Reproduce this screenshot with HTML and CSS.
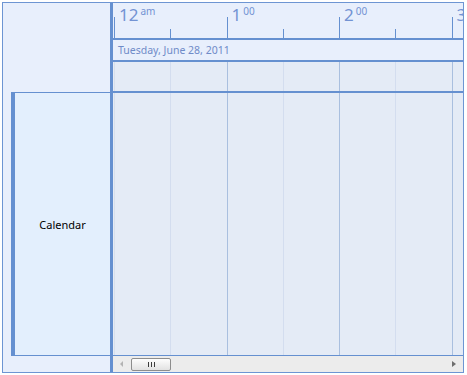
FILE: index.html
```html
<!DOCTYPE html>
<html>
<head>
  <meta charset="UTF-8">
  <title>Schedule</title>
  <link rel="stylesheet" href="styles.css">
</head>
<body>

  <div class="scheduler">
    <div class="side">
      <div class="side-top"></div>
      <div class="resource">Calendar</div>
      <div class="side-bottom"></div>
    </div>

    <div class="main">
      <div class="ruler">
        <div class="hour"><span class="hour-num">12</span><sup>am</sup></div>
        <div class="hour"><span class="hour-num">1</span><sup>00</sup></div>
        <div class="hour"><span class="hour-num">2</span><sup>00</sup></div>
        <div class="hour"><span class="hour-num">3</span><sup>00</sup></div>
      </div>

      <div class="date-row">Tuesday, June 28, 2011</div>

      <div class="slots allday">
        <div class="slot"></div>
        <div class="slot half"></div>
        <div class="slot"></div>
        <div class="slot half"></div>
        <div class="slot"></div>
        <div class="slot half"></div>
        <div class="slot"></div>
      </div>

      <div class="slots body">
        <div class="slot"></div>
        <div class="slot half"></div>
        <div class="slot"></div>
        <div class="slot half"></div>
        <div class="slot"></div>
        <div class="slot half"></div>
        <div class="slot"></div>
      </div>

      <div class="hscroll">
        <span class="arrow arrow-left"></span>
        <div class="thumb"><span></span><span></span><span></span></div>
        <span class="arrow arrow-right"></span>
      </div>
    </div>
  </div>

</body>
</html>
```

FILE: styles.css
```css
* {
  box-sizing: border-box;
}

body {
  margin: 0;
  padding: 2px 0 0 2px;
  background: #fff;
  font-family: "Noto Sans", "Open Sans", sans-serif;
}

.scheduler {
  width: 462px;
  height: 371px;
  border: 1px solid #6d95d3;
  display: flex;
  background: #e8effc;
}

/* left resource column */
.side {
  width: 110px;
  border-right: 3px solid #6590d0;
  display: flex;
  flex-direction: column;
}

.side-top {
  height: 89px;
}

.resource {
  height: 264px;
  margin-left: 8px;
  border-left: 4px solid #6590d0;
  border-top: 1px solid #6590d0;
  border-bottom: 1px solid #6590d0;
  background: #e3effd;
  display: flex;
  align-items: center;
  justify-content: center;
  font-size: 11px;
  color: #000;
}

.side-bottom {
  height: 16px;
}

/* right part */
.main {
  flex: 1;
  display: flex;
  flex-direction: column;
  overflow: hidden;
}

.ruler {
  height: 37px;
  border-bottom: 2px solid #6590d0;
  padding-left: 1px;
  display: flex;
  color: #7393d3;
}

.hour {
  flex: 0 0 112.5px;
  padding: 2px 0 0 5px;
  line-height: 20px;
  white-space: nowrap;
  background:
    linear-gradient(#6590d0, #6590d0) 0 100% / 1px 21px no-repeat,
    linear-gradient(#6590d0, #6590d0) 56px 100% / 1px 9px no-repeat;
}

.hour-num {
  font-size: 17px;
}

.hour sup {
  font-size: 10px;
  line-height: 0;
  vertical-align: 6px;
  margin-left: 2px;
}

.date-row {
  height: 22px;
  border-bottom: 2px solid #6590d0;
  padding: 3px 0 0 5px;
  font-size: 10.5px;
  color: #6f8bc8;
}

.slots {
  display: flex;
  padding-left: 1px;
  background: #e4ebf6;
}

.allday {
  height: 31px;
  border-bottom: 2px solid #6590d0;
}

.body {
  height: 263px;
  border-bottom: 1px solid #6590d0;
}

.slot {
  flex: 0 0 56.25px;
  border-left: 1px solid #a9bfdf;
}

.slot.half {
  border-left-color: #d3ddef;
}

.slot:first-child {
  border-left-color: #d7dfeb;
}

/* horizontal scrollbar */
.hscroll {
  height: 16px;
  background: #ececec;
  display: flex;
  align-items: center;
  padding: 0 7px 0 7px;
}

.arrow {
  width: 0;
  height: 0;
  border-top: 3px solid transparent;
  border-bottom: 3px solid transparent;
}

.arrow-left {
  border-right: 3px solid #b3b3b3;
}

.arrow-right {
  border-left: 4px solid #6e6e6e;
  margin-left: auto;
}

.thumb {
  width: 40px;
  height: 13px;
  margin: 1px 0 0 8px;
  border: 1px solid #8d8d8d;
  border-radius: 2px;
  background: linear-gradient(to bottom, #fdfdfd, #e2e2e2);
  display: flex;
  justify-content: center;
  align-items: center;
  gap: 1px;
}

.thumb span {
  width: 1px;
  height: 5px;
  background: #3c3c3c;
  margin: 0 0.5px;
}
```
